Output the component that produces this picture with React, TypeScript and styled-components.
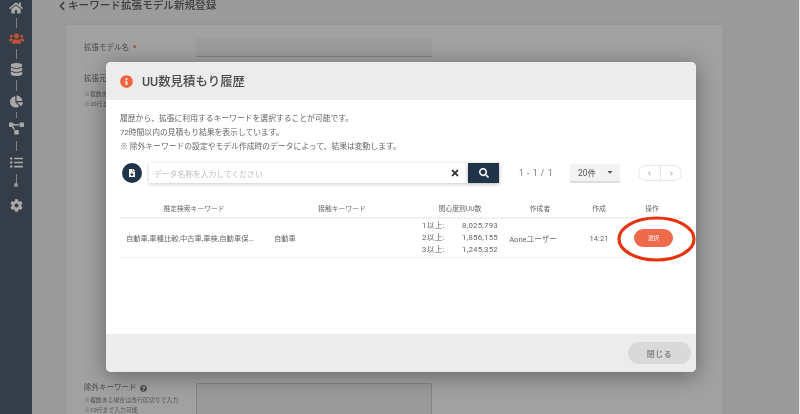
import React from "react";
import styled, { createGlobalStyle } from "styled-components";
import { FaHome, FaUsers, FaDatabase, FaChartPie, FaProjectDiagram, FaListUl, FaCog, FaInfoCircle, FaFileDownload, FaSearch, FaTimes, FaChevronLeft, FaChevronRight, FaQuestionCircle, FaCaretDown } from "react-icons/fa";

const Global = createGlobalStyle`
  html, body { margin: 0; padding: 0; background: #e8e8e8; }
  body { font-family: Roboto, "Noto Sans CJK JP", sans-serif; }
  * { box-sizing: border-box; }
`;
const Shell = styled.div`
  width: 800px; height: 414px; overflow: hidden; position: relative; display: flex; filter: blur(0.5px);
`;
const Sidebar = styled.nav`
  width: 32px; flex: none; background: #353e48; display: flex; flex-direction: column; align-items: center; padding-top: 1px;
`;
const NavIcon = styled.div<{ $active?: boolean; $size?: number; $top?: number }>`
  height: 13px; display: flex; align-items: center; justify-content: center; margin-top: ${p => p.$top ?? 0}px;
  font-size: ${p => p.$size ?? 13}px; color: ${p => (p.$active ? "#bd5238" : "#a8a8a8")};
`;
const NavLine = styled.div<{ $h: number; $m?: number }>`
  width: 1px; height: ${p => p.$h}px; background: #7d8288; margin: ${p => p.$m ?? 4}px 0;
`;
const NavDot = styled.div`
  width: 4px; height: 4px; border-radius: 50%; background: #969696; margin-top: -6px;
`;
const Main = styled.main`
  width: 767px; flex: none; background: #9b9b9b; padding: 0 0 0 25px;
`;
const PageTitle = styled.h1`
  margin: -3px 0 0; height: 18px; font-size: 10.6px; line-height: 18px; font-weight: 500; color: #3d3d3d; display: flex; align-items: center; gap: 1px;
  svg { font-size: 10px; }
`;
const Card = styled.div`
  margin: 10px 0 0 9px; width: 657px; height: 400px; padding: 17px 0 0 18px; background: #a1a1a1; box-shadow: 0 0 6px rgba(0,0,0,.04);
  display: flex; flex-direction: column;
`;
const FormRow = styled.div<{ $h: number }>`
  display: grid; grid-template-columns: 112px 236px; height: ${p => p.$h}px; flex: none;
`;
const Label = styled.div`
  font-size: 7.5px; line-height: 12px; color: #4a4a4a; display: flex; align-items: center; gap: 3px; height: 12px;
  b { color: #a33; font-weight: 700; margin-left: 1px; }
  svg { font-size: 7px; }
`;
const Note = styled.div<{ $gap: number }>`
  font-size: 5.9px; line-height: 9.5px; color: #565656; margin-top: ${p => p.$gap}px; white-space: nowrap;
`;
const Underlined = styled.div`
  height: 19px; margin-top: -4px; background: #9c9c9c; border-bottom: 1px solid #828282;
`;
const Area = styled.div`
  height: 60px; border: 1px solid #858585; border-radius: 2px; margin-top: 1px; background: #9a9a9a;
`;
const Overlay = styled.div`
  position: absolute; left: 0; top: 0; width: 799px; height: 414px; padding: 62px 0 0 106px;
`;
const Modal = styled.section`
  width: 590px; height: 310px; background: #fff; border-radius: 5px; overflow: hidden; display: flex; flex-direction: column;
  box-shadow: 0 4px 22px rgba(0,0,0,.38);
  position: relative;
`;
const ModalHead = styled.header`
  height: 38px; flex: none; background: #ececec; display: flex; align-items: center; padding-left: 14px; gap: 9px;
  svg { font-size: 13px; color: #f2623c; }
`;
const ModalTitle = styled.h2`
  margin: 0; font-size: 12.4px; font-weight: 500; color: #4b4b4b;
`;
const ModalBody = styled.div`
  flex: 1; padding: 12px 14px 0;
`;
const Desc = styled.p`
  margin: 0; font-size: 7.8px; line-height: 14px; color: #666; white-space: nowrap;
`;
const Toolbar = styled.div`
  display: flex; align-items: center; margin-top: 9px; height: 20px;
`;
const FileBadge = styled.div`
  width: 20px; height: 20px; margin-left: 2px; border-radius: 50%; background: #1f3448; color: #fff; display: flex; align-items: center; justify-content: center; font-size: 8px; flex: none;
`;
const SearchBox = styled.div`
  margin-left: 7px; width: 319px; height: 20px; display: flex; align-items: center; padding: 0 8px 0 5px; background: #fff; box-shadow: 0 1px 4px rgba(0,0,0,.22); font-size: 7.8px; color: #bdbdbd; justify-content: space-between;
  svg { color: #333; font-size: 10px; }
`;
const SearchButton = styled.button`
  width: 31px; height: 20px; border: 0; padding: 0; background: #1f3448; color: #fff; font-size: 10px; display: flex; align-items: center; justify-content: center; flex: none; box-shadow: 0 1px 4px rgba(0,0,0,.3);
`;
const Range = styled.div`
  margin-left: 20px; width: 51px; font-size: 8.5px; letter-spacing: .6px; color: #777; white-space: nowrap;
`;
const PerPage = styled.div`
  width: 50px; height: 19px; background: #f3f3f3; border-bottom: 2px solid #ddd; font-size: 8.5px; color: #555; display: flex; align-items: center; justify-content: space-between; padding: 0 6px 0 8px;
  svg { font-size: 8px; }
`;
const Pager = styled.div`
  margin-left: 18px; width: 44px; height: 16px; border: 1px solid #e6e6e6; border-radius: 8px; display: grid; grid-template-columns: 1fr 1fr; color: #aaa; font-size: 5px;
  span { display: flex; align-items: center; justify-content: center; }
  span + span { border-left: 1px solid #e6e6e6; }
`;
const Table = styled.div`
  margin-top: 20px; width: 562px;
`;
const columns = "148px 148px 88px 72px 46px 60px";
const HeadRow = styled.div`
  display: grid; grid-template-columns: ${columns}; height: 16px; border-bottom: 2px solid #f1f1f1; font-size: 6.8px; color: #666; text-align: center; line-height: 13px;
`;
const BodyRow = styled.div`
  display: grid; grid-template-columns: ${columns}; height: 39px; border-bottom: 1px solid #f0f0f0; font-size: 7.3px; color: #666; align-items: center;
`;
const KeywordCell = styled.div`
  padding-left: 6px; white-space: nowrap; overflow: hidden;
`;
const TouchCell = styled.div`
  padding-left: 6px;
`;
const Scores = styled.div`
  display: grid; grid-template-columns: 1fr auto; padding: 0 6px; line-height: 12px; font-size: 7.8px; letter-spacing: .25px;
`;
const Center = styled.div<{ $shift?: number }>`
  text-align: center; white-space: nowrap; font-size: 7.6px; padding-right: ${p => p.$shift ?? 0}px;
`;
const Pick = styled.button`
  display: block; width: 39px; height: 18px; margin: 0 0 0 12px; border: 0; border-radius: 9px; background: #ee6a4a; color: #fff; font-size: 5.5px; padding: 0; font-family: inherit;
`;
const Ring = styled.svg`
  position: absolute; left: 510px; top: 154px; width: 80px; height: 50px; overflow: visible; pointer-events: none;
`;
const ModalFoot = styled.footer`
  height: 38px; flex: none; background: #ececec; display: flex; align-items: center; justify-content: flex-end; padding-right: 5px;
`;
const Close = styled.button`
  width: 63px; height: 22px; border: 0; border-radius: 11px; background: #d9d9d9; color: #888; font-size: 8px; font-weight: 700; letter-spacing: .5px; font-family: inherit; padding: 0;
`;

export default function App() {
  return (
    <>
      <Global />
      <Shell>
        <Sidebar>
          <NavIcon $size={14}><FaHome /></NavIcon>
          <NavLine $h={10} />
          <NavIcon $active $size={15}><FaUsers /></NavIcon>
          <NavLine $h={10} />
          <NavIcon><FaDatabase /></NavIcon>
          <NavLine $h={11} />
          <NavIcon><FaChartPie /></NavIcon>
          <NavLine $h={6} />
          <NavIcon $size={15}><FaProjectDiagram /></NavIcon>
          <NavLine $h={10} $m={5.5} />
          <NavIcon><FaListUl /></NavIcon>
          <NavLine $h={10} $m={5} />
          <NavDot />
          <NavIcon $top={12}><FaCog /></NavIcon>
        </Sidebar>
        <Main>
          <PageTitle><FaChevronLeft />キーワード拡張モデル新規登録</PageTitle>
          <Card>
            <FormRow $h={31}>
              <Label>拡張モデル名<b>*</b></Label>
              <Underlined />
            </FormRow>
            <FormRow $h={309}>
              <div>
                <Label>拡張元キーワード</Label>
                <Note $gap={5}>※複数ある場合は改行区切りで入力<br />※20行まで入力可能</Note>
              </div>
              <div />
            </FormRow>
            <FormRow $h={60}>
              <div>
                <Label>除外キーワード<FaQuestionCircle /></Label>
                <Note $gap={2}>※複数ある場合は改行区切りで入力<br />※10行まで入力可能</Note>
              </div>
              <Area />
            </FormRow>
          </Card>
        </Main>
        <Overlay>
          <Modal>
            <ModalHead>
              <FaInfoCircle />
              <ModalTitle>UU数見積もり履歴</ModalTitle>
            </ModalHead>
            <ModalBody>
              <Desc>履歴から、拡張に利用するキーワードを選択することが可能です。</Desc>
              <Desc>72時間以内の見積もり結果を表示しています。</Desc>
              <Desc>※ 除外キーワードの設定やモデル作成時のデータによって、結果は変動します。</Desc>
              <Toolbar>
                <FileBadge><FaFileDownload /></FileBadge>
                <SearchBox>データ名称を入力してください<FaTimes /></SearchBox>
                <SearchButton aria-label="検索"><FaSearch /></SearchButton>
                <Range>1 - 1 / 1</Range>
                <PerPage>20件<FaCaretDown /></PerPage>
                <Pager><span><FaChevronLeft /></span><span><FaChevronRight /></span></Pager>
              </Toolbar>
              <Table>
                <HeadRow>
                  <div>推定検索キーワード</div>
                  <div>接触キーワード</div>
                  <div>関心度別UU数</div>
                  <div>作成者</div>
                  <div>作成</div>
                  <div>操作</div>
                </HeadRow>
                <BodyRow>
                  <KeywordCell>自動車,車種比較,中古車,車検,自動車保…</KeywordCell>
                  <TouchCell>自動車</TouchCell>
                  <Scores>
                    <span>1以上:</span><span>8,025,793</span>
                    <span>2以上:</span><span>1,856,155</span>
                    <span>3以上:</span><span>1,245,352</span>
                  </Scores>
                  <Center $shift={14}>Aoneユーザー</Center>
                  <Center>14:21</Center>
                  <div><Pick>選択</Pick></div>
                </BodyRow>
              </Table>
            </ModalBody>
            <Ring viewBox="0 0 80 50">
              <ellipse cx="40.5" cy="23" rx="37.5" ry="21" fill="none" stroke="#e8330f" strokeWidth="3.2" />
            </Ring>
            <ModalFoot>
              <Close>閉じる</Close>
            </ModalFoot>
          </Modal>
        </Overlay>
      </Shell>
    </>
  );
}
